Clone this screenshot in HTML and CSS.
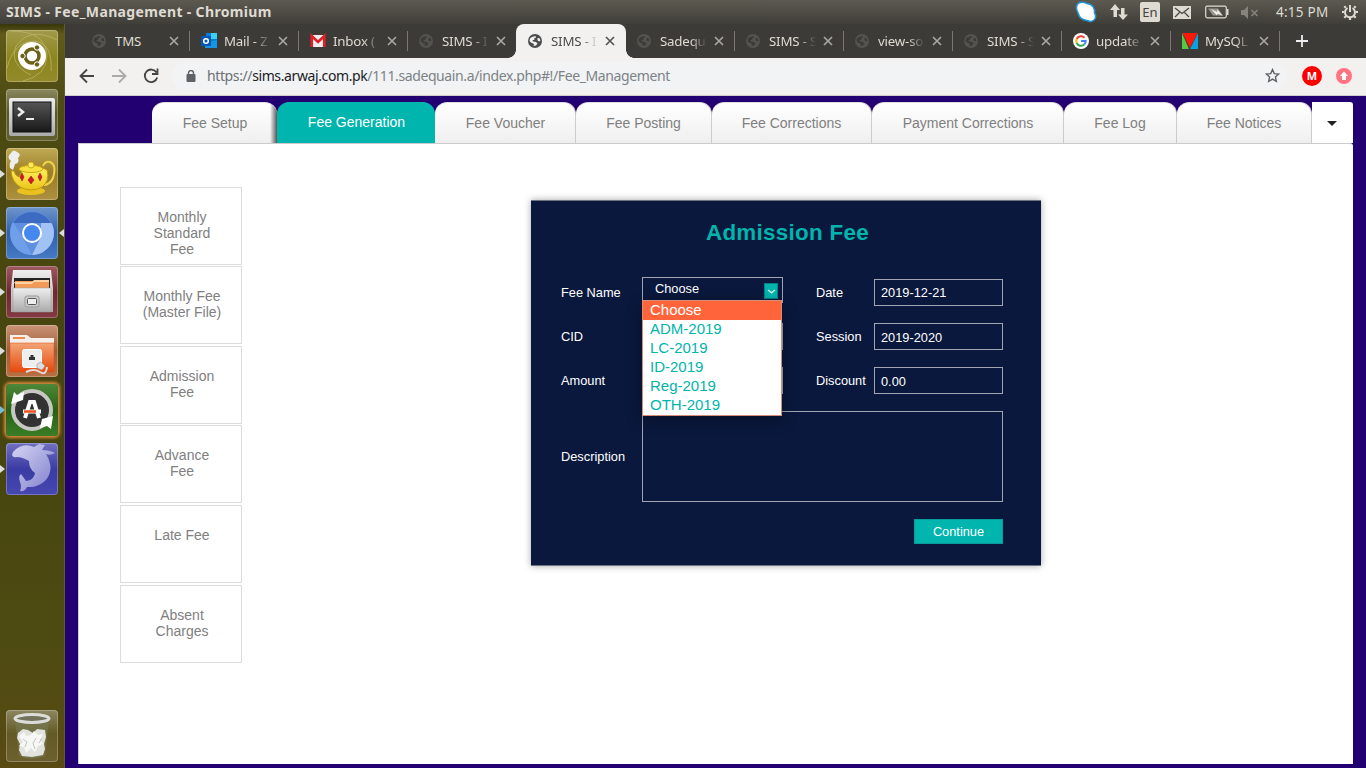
FILE: index.html
```html
<!DOCTYPE html>
<html lang="en">
<head>
<meta charset="utf-8">
<title>SIMS - Fee_Management</title>
<link rel="stylesheet" href="styles.css">
</head>
<body>
<svg class="defs" width="0" height="0">
  <defs>
    <symbol id="globe" viewBox="0 0 16 16"><circle cx="8" cy="8" r="7" fill="currentColor"/><path d="M3 5.500 5 4l3.500-1 .5 1.500-2 1 .5 1.500H5.500L6 8.500l3 .5 1.500 1.500L9 12.500l-2.500.5L7 11 4 9.500 2.500 8zM10.500 5l2 .2 1 2.300-1.500 1-1.500-1.200z" fill="var(--hole)"/></symbol>
    <symbol id="close" viewBox="0 0 10 10"><path d="M1 1l8 8M9 1l-8 8" stroke="currentColor" stroke-width="1.700" fill="none"/></symbol>
    <linearGradient id="metal" x2="0" y2="1"><stop offset="0" stop-color="#eee"/><stop offset="1" stop-color="#aaa"/></linearGradient>
    <linearGradient id="dark" x2="0" y2="1"><stop offset="0" stop-color="#555"/><stop offset="1" stop-color="#181818"/></linearGradient>
    <linearGradient id="gold" x2="0" y2="1"><stop offset="0" stop-color="#fff36a"/><stop offset="1" stop-color="#eac416"/></linearGradient>
    <linearGradient id="folder" x2="0" y2="1"><stop offset="0" stop-color="#f3a477"/><stop offset="1" stop-color="#e6490d"/></linearGradient>
    <linearGradient id="fish" x2="1" y2="1"><stop offset="0" stop-color="#d5d5f4"/><stop offset="1" stop-color="#7d7dcc"/></linearGradient>
  </defs>
</svg>

<header class="topbar">
  <span class="window-title">SIMS - Fee_Management - Chromium</span>
  <div class="indicators">
    <svg class="i-skype" width="24" height="24" viewBox="0 0 24 24"><path d="M4 3.500Q8 1 13 3.500C19 4 21 9 20.500 13Q23 17 20 20 17 22.500 13 20.500 6 20 4 13 1 7 4 3.500z" fill="#fff" stroke="#2196d8" stroke-width="1.500"/></svg>
    <svg class="i-net" width="18" height="18" viewBox="0 0 18 18" fill="#dfdbd2"><path d="M5 1l5 6H7v7H3.500V7H0zM13 17l-5-5.500h3V5h3.500v6.500H18z"/></svg>
    <span class="lang">En</span>
    <svg class="i-mail" width="18" height="13" viewBox="0 0 18 13"><path fill="#dfdbd2" d="M0 0h18v13H0z"/><path d="M2 2l7 5.500L16 2M2 11l4.500-4.500M16 11l-4.500-4.500" fill="none" stroke="#45433d" stroke-width="1.200"/></svg>
    <svg class="i-batt" width="24" height="14" viewBox="0 0 24 14"><rect x=".7" y="1.200" width="20.600" height="11.600" rx="1.500" fill="none" stroke="#dfdbd2" stroke-width="1.200"/><path d="M22 4h1.500v6H22z" fill="#dfdbd2"/><path d="M3 3.500h10l5 7H8z" fill="#99968e"/><path d="M6 4l6 3 .5-2.500 5 6.500-5-2.500-.5 2z" fill="#f3f0e7"/></svg>
    <svg class="i-vol" width="18" height="13" viewBox="0 0 18 13" fill="#86837b"><path d="M0 4h3l4-4v13L3 9H0z"/><path d="M10.500 4l6 6m0-6l-6 6" stroke="#86837b" stroke-width="1.700"/></svg>
    <span class="clock">4:15 PM</span>
    <svg class="i-gear" width="16" height="16" viewBox="0 0 16 16" fill="none" stroke="#dfdbd2"><path d="M5.500 4a5 5 0 1 0 5 0" stroke-width="2"/><path d="M8 1v7" stroke-width="2"/><path d="M0 8h2m12 0h2M2.300 2.300l1.500 1.500m8.400 0 1.500-1.500M2.300 13.700l1.500-1.500m8.400 0 1.500 1.500M8 14v2" stroke-width="2.200"/></svg>
  </div>
</header>

<div class="desktop">
  <aside class="launcher">
    <div class="app ubuntu"><svg viewBox="0 0 52 52"><g fill="none" stroke="#c5bf78" opacity=".6"><path d="M5 1q35 0 36 25-1 20-24 25M51 10Q24-4 10 16 3 35 25 45M1 38q7-27 28-27 18 3 16 30" stroke-width="1"/></g><circle cx="26" cy="26" r="14" fill="#fff"/><circle cx="26" cy="26" r="7" fill="none" stroke="#6b6116" stroke-width="3.500"/><g fill="#6b6116" stroke="#fff" stroke-width="1"><circle cx="16.500" cy="26" r="2.700"/><circle cx="31" cy="17.500" r="2.700"/><circle cx="31" cy="34.500" r="2.700"/></g></svg></div>
    <div class="app terminal"><svg viewBox="0 0 52 52"><rect x="3" y="9" width="46" height="38" rx="2" fill="url(#metal)"/><rect x="7" y="13" width="38" height="30" fill="url(#dark)" stroke="#111"/><path d="M12 19l5 4-5 4" fill="none" stroke="#eee" stroke-width="2.500"/><path d="M20 30h8" stroke="#eee" stroke-width="2"/></svg></div>
    <div class="app teapot run"><svg viewBox="0 0 52 52"><path d="M4 20q-1-5 1-7-5-4 0-8 2-4 6-1 5 2 1 6 2 5-3 6l-2 6z" fill="#eee"/><path d="M37 18q2-5 7-4 7 3 3 16-3 7-10 7" fill="none" stroke="#efd34a" stroke-width="2"/><ellipse cx="25" cy="43" rx="14" ry="4" fill="#eac21f"/><path d="M13 29q-4-1-5-6l-3 0q1 11 9 16 11 6 22 0 8-6 5-17-12-7-24 0z" fill="url(#gold)" stroke="#c69c0d"/><ellipse cx="25" cy="21" rx="12" ry="3.500" fill="#f7df3d" stroke="#d2a812"/><circle cx="25" cy="17" r="3" fill="#fbea63" stroke="#d2a812"/><path d="M16 25l2 4-2 4-2-4zM25 28l3 4-3 4-3-4zM34 25l2 4-2 4-2-4z" fill="#d6142a" stroke="#851616" stroke-width=".5"/></svg></div>
    <div class="app chromium run focused"><svg viewBox="0 0 52 52"><circle cx="26" cy="26" r="22" fill="#5f8fdf"/><path d="M7 16A22 22 0 0 1 45 16H26z" fill="#3c6bc1"/><path d="M45.500 16A22 22 0 0 1 26 48L35 30V16z" fill="#a2c2f5"/><path d="M7 15L17 31l9 17A22 22 0 0 1 7 15z" fill="#709fea"/><circle cx="26" cy="26" r="10" fill="#fff"/><circle cx="26" cy="26" r="8" fill="#4488f0"/></svg></div>
    <div class="app files run"><svg viewBox="0 0 52 52"><path d="M7 4h38l2 18v24H5V22z" fill="url(#metal)"/><path d="M8 12h36v10H8z" fill="#222"/><path d="M9 15h34v7H9z" fill="#f29a58"/><path d="M8 16h18l2-2h15v2H28l-2 2H9z" fill="#fbd2a5"/><path d="M7 22h38v24H7z" fill="url(#metal)" stroke="#999" stroke-width=".5"/><rect x="19" y="30" width="14" height="11" rx="2" fill="#ccc" stroke="#999"/><rect x="21.500" y="32.500" width="9" height="6" rx="1" fill="#eee" stroke="#555"/></svg></div>
    <div class="app share run"><svg viewBox="0 0 52 52"><path d="M4 10h17l4 3h23v7H4z" fill="#f5eee9"/><path d="M7 12h12v2H7z" fill="#ed8855"/><path d="M4 18h44v27q0 2-2 2H6q-2 0-2-2z" fill="url(#folder)" stroke="#d84d15" stroke-width=".5"/><rect x="16.500" y="24.500" width="19" height="18" rx="2" fill="#eee" stroke="#fff"/><path d="M23 35v-3h1.500v-2h3v2H29v3z" fill="#333"/><path d="M20 47q8-4 14 0t7-5" fill="none" stroke="#ddd" stroke-width="2"/><path d="M31 39l4-2 4 4-3 4-5-2z" fill="#ddd" stroke="#999" stroke-width=".6"/></svg></div>
    <div class="app updater run"><svg viewBox="0 0 52 52"><circle cx="26" cy="26" r="19" fill="#333" stroke="#c8c8c2" stroke-width="4"/><path d="M5 20L8 8l3 3 7-3-1 8z" fill="#fff"/><path d="M47 32l-2 13-4-3-7 2 2-9z" fill="#fff"/><path d="M19 34l5-16h4l5 16" fill="none" stroke="#fff" stroke-width="4"/><path d="M17 27.500h18" stroke="#fff" stroke-width="4"/><path d="M18 27.500h12" stroke="#e9541e" stroke-width="2.500"/></svg></div>
    <div class="app workbench run"><svg viewBox="0 0 52 52"><path d="M7 9Q16-1 28 4l5-3 6 1-3 5q8 0 13 3-5 3-9 1 9 15 0 26-8 8-19 7-2 5-7 4 2-5 0-9-2-6 1-8 3 4 5 7 8-1 9-8-6-4-6-12-7-4-12-4-4 1-5-2z" fill="url(#fish)"/></svg></div>
    <div class="app trash"><svg viewBox="0 0 52 52"><path d="M9 9l4 37q13 6 26 0l4-37z" fill="#777b55" opacity=".6"/><path d="M12 23l5-4 5 1 5 3 4-4 8 1 1 7-2 7 1 5-2 6-11 2-10-1-3-6 1-6-3-6z" fill="#e2e2df"/><path d="M13 26l5-4 2 4 5-1 3-4 4 4 5-1-3 6 3 4-5 2-3 6-4-4-5 5-2-6-5-1 4-4z" fill="#f7f7f5"/><path d="M17 29l4 3-2 5m11-9l-3 5 2 6m7-11l-3 5" fill="none" stroke="#c4c4c0"/><ellipse cx="26" cy="8.500" rx="17" ry="4" fill="#72725c" stroke="#dcdcd8" stroke-width="3"/></svg></div>
  </aside>

  <main class="browser">
    <nav class="tabstrip">
      <div class="tab"><svg class="fav globe"><use href="#globe"/></svg><span>TMS</span><svg class="x"><use href="#close"/></svg></div>
      <div class="tab"><svg class="fav" viewBox="0 0 16 16"><path d="M5 0h11v14H5z" fill="#0a7bd7"/><path d="M10 0h6v6h-6z" fill="#38d4f8"/><path d="M4 10l12-3v8H4z" fill="#1596e4"/><path d="M0 3h10v10H0z" fill="#0755b5"/><circle cx="5" cy="8" r="2.300" fill="none" stroke="#fff" stroke-width="1.500"/></svg><span>Mail - Z</span><svg class="x"><use href="#close"/></svg></div>
      <div class="tab"><svg class="fav" viewBox="0 0 16 16"><path d="M1 2h14v12H1z" fill="#eee"/><path d="M1.700 14V3L8 9l6.300-6v11" fill="none" stroke="#df2027" stroke-width="2.700"/></svg><span>Inbox (</span><svg class="x"><use href="#close"/></svg></div>
      <div class="tab no-sep"><svg class="fav globe"><use href="#globe"/></svg><span>SIMS - I</span><svg class="x"><use href="#close"/></svg></div>
      <div class="tab active"><svg class="fav globe"><use href="#globe"/></svg><span>SIMS - I</span><svg class="x"><use href="#close"/></svg></div>
      <div class="tab"><svg class="fav globe"><use href="#globe"/></svg><span>Sadequ</span><svg class="x"><use href="#close"/></svg></div>
      <div class="tab"><svg class="fav globe"><use href="#globe"/></svg><span>SIMS - S</span><svg class="x"><use href="#close"/></svg></div>
      <div class="tab"><svg class="fav globe"><use href="#globe"/></svg><span>view-so</span><svg class="x"><use href="#close"/></svg></div>
      <div class="tab"><svg class="fav globe"><use href="#globe"/></svg><span>SIMS - S</span><svg class="x"><use href="#close"/></svg></div>
      <div class="tab"><svg class="fav" viewBox="0 0 16 16"><circle cx="8" cy="8" r="8" fill="#fff"/><g fill="none" stroke-width="2"><path d="M11.500 4.700A4.800 4.800 0 0 0 3.700 6" stroke="#ea4335"/><path d="M3.700 6a4.800 4.800 0 0 0 0 4" stroke="#fbbc05"/><path d="M3.700 10a4.800 4.800 0 0 0 7.500 1.600" stroke="#34a853"/><path d="M11.200 11.600A4.500 4.500 0 0 0 12.700 8H8" stroke="#4285f4"/></g></svg><span>update</span><svg class="x"><use href="#close"/></svg></div>
      <div class="tab"><svg class="fav" viewBox="0 0 16 16"><path d="M0 0v16h7z" fill="#56c940"/><path d="M16 0v16H8z" fill="#08a1e2"/><path d="M.5 0h15L8 15z" fill="#fb1808"/></svg><span>MySQL</span><svg class="x"><use href="#close"/></svg></div>
      <svg class="plus" viewBox="0 0 12 12"><path d="M6 0v12M0 6h12" stroke="#eee" stroke-width="1.800"/></svg>
    </nav>
    <div class="toolbar">
      <svg width="16" height="16" viewBox="0 0 16 16" fill="none" stroke="#444" stroke-width="1.800"><path d="M15 8H2M8 1.500L1.500 8 8 14.500"/></svg>
      <svg width="16" height="16" viewBox="0 0 16 16" fill="none" stroke="#aaa" stroke-width="1.800"><path d="M1 8h13M8 1.500L14.500 8 8 14.500"/></svg>
      <svg width="16" height="16" viewBox="0 0 16 16" fill="none" stroke="#444" stroke-width="1.800"><path d="M13.500 4.500A6.300 6.300 0 1 0 14.200 9.500M9 6h5.500V.5"/></svg>
      <div class="omnibox">
        <svg width="10" height="12" viewBox="0 0 10 12"><rect x=".5" y="4" width="9" height="8" rx="1" fill="#5f6368"/><path d="M2.500 5V3a2.500 2.500 0 0 1 5 0v2" fill="none" stroke="#5f6368" stroke-width="1.400"/></svg>
        <span class="url"><i>https://</i>sims.arwaj.com.pk<em>/111.sadequain.a/index.php#!/Fee_Management</em></span>
        <svg class="star" width="15" height="15" viewBox="0 0 16 16"><path d="M8 1.700l1.900 4.300 4.700.5-3.500 3.100 1 4.700L8 11.900l-4.100 2.400 1-4.700L1.400 6.500 6.100 6z" fill="none" stroke="#5f6368" stroke-width="1.500"/></svg>
      </div>
      <span class="ext-m">M</span>
      <svg width="16" height="16" viewBox="0 0 16 16"><circle cx="8" cy="8" r="8" fill="#ff7480"/><path d="M8 3.500l4 4.500h-2v4H6V8H4z" fill="#fff"/></svg>
    </div>

    <div class="page">
      <nav class="menu">
        <a class="item setup">Fee Setup</a>
        <a class="item on generation">Fee Generation</a>
        <a class="item voucher">Fee Voucher</a>
        <a class="item posting">Fee Posting</a>
        <a class="item corrections">Fee Corrections</a>
        <a class="item payment">Payment Corrections</a>
        <a class="item log">Fee Log</a>
        <a class="item notices">Fee Notices</a>
        <a class="more"></a>
      </nav>
      <section class="panel">
        <div class="side">
          <a>Monthly<br>Standard<br>Fee</a>
          <a>Monthly Fee<br>(Master File)</a>
          <a>Admission<br>Fee</a>
          <a>Advance<br>Fee</a>
          <a>Late Fee</a>
          <a>Absent<br>Charges</a>
        </div>
        <form class="card">
          <h1>Admission Fee</h1>
          <div class="grid">
            <label>Fee Name</label>
            <div class="select">
              <span>Choose</span>
              <b class="arrow"><svg viewBox="0 0 9 5"><path d="M1 1l3.500 2.800L8 1" fill="none" stroke="#cdf3f0" stroke-width="1.300"/></svg></b>
              <ul class="options"><li class="sel">Choose</li><li>ADM-2019</li><li>LC-2019</li><li>ID-2019</li><li>Reg-2019</li><li>OTH-2019</li></ul>
            </div>
            <label class="second">Date</label><div class="field date">2019-12-21</div>
            <label>CID</label><div class="field"></div>
            <label class="second">Session</label><div class="field">2019-2020</div>
            <label>Amount</label><div class="field"></div>
            <label class="second">Discount</label><div class="field">0.00</div>
            <label>Description</label><div class="field wide"></div>
            <button type="button">Continue</button>
          </div>
        </form>
      </section>
    </div>
  </main>
</div>
</body>
</html>
```
FILE: styles.css
```css
* { box-sizing: border-box; }
body { margin: 0; width: 1366px; height: 768px; overflow: hidden; display: flex; flex-direction: column; font-family: "Liberation Sans", Arial, sans-serif; }
.defs { position: absolute; }
svg { display: block; flex: none; }

.topbar { height: 24px; flex: none; background: linear-gradient(#5c5a50, #403e39); display: flex; justify-content: space-between; align-items: center; padding: 0 8px 0 6px; font: 13.500px "Noto Sans", sans-serif; color: #dfdbd2; }
.window-title { font-weight: 700; font-size: 14px; letter-spacing: .35px; line-height: 22px; margin-top: -1px; }
.indicators { display: flex; align-items: center; }
.i-net { margin-left: 12px; }
.lang { margin-left: 12px; width: 20px; height: 20px; border-radius: 2px; background: #dfdbd2; color: #45433d; text-align: center; line-height: 21px; font-size: 13px; }
.i-mail { margin-left: 13px; }
.i-batt { margin-left: 14px; }
.i-vol { margin-left: 12px; }
.clock { margin-left: 17px; width: 53px; white-space: nowrap; letter-spacing: .25px; }
.i-gear { margin-left: 13px; }

.desktop { flex: 1; display: flex; min-height: 0; }
.launcher { width: 65px; flex: none; padding: 6px 0 6px 6px; border-right: 1px solid #5d5a3a; display: flex; flex-direction: column; gap: 7px; background: linear-gradient(#37360b 0, #615a19 10px, #4d4a12 80px, #46440f 400px, #4e4b12 620px, #594b13 100%); }
.app { width: 52px; height: 52px; flex: none; border-radius: 4px; position: relative; box-shadow: inset 0 0 0 1px rgba(255,255,255,.25); background: linear-gradient(rgba(255,255,255,.33), rgba(255,255,255,.08) 45%, rgba(255,255,255,.12)); }
.app svg { width: 52px; height: 52px; }
.ubuntu { background: linear-gradient(#a39a4b, #8c851e 55%, #938a2b); }
.teapot { background: linear-gradient(#c0aa55, #9a7d25 50%, #ae9141); }
.chromium { background: linear-gradient(#6e96ce, #315fab 50%, #477bc4); }
.files { background: linear-gradient(#9f5a61, #6d2730 50%, #843b43); }
.share { background: linear-gradient(#c99376, #a05c38 50%, #b87145); }
.updater { background: linear-gradient(#4f873a, #286016 50%, #3b7d27); box-shadow: 0 0 3px 2px #d48a3d; }
.workbench { background: linear-gradient(#7171bf, #3b3ba4 50%, #4747b0); }
.trash { margin-top: auto; }
.run::before { content: ""; position: absolute; left: -6px; top: 22px; border: 4px solid transparent; border-left: 5px solid #ddd; border-right: 0; }
.updater::before { border-left-color: #70bed5; }
.focused::after { content: ""; position: absolute; right: -6px; top: 22px; border: 4px solid transparent; border-right: 5px solid #ddd; border-left: 0; }

.browser { flex: 1; min-width: 0; display: flex; flex-direction: column; }
.tabstrip { height: 34px; flex: none; padding-left: 15px; background: #3c3b37; display: flex; align-items: center; font: 13.300px "Noto Sans", sans-serif; color: #dfdbd2; }
.tab { --hole: #3c3b37; width: 109px; height: 34px; flex: none; display: flex; align-items: center; padding-left: 11px; position: relative; }
.tab:not(.active):not(.no-sep)::after { content: ""; position: absolute; right: -1px; top: 7px; width: 1px; height: 20px; background: #79776f; }
.tab .fav { width: 16px; height: 16px; margin-left: 1px; }
.tab .globe { margin-left: 0; margin-right: 1px; }
.globe { color: #54534f; }
.tab span { width: 49px; margin-left: 7px; white-space: nowrap; letter-spacing: -.2px; -webkit-mask-image: linear-gradient(90deg, #000 30px, transparent 47px); mask-image: linear-gradient(90deg, #000 30px, transparent 47px); }
.tab .x { width: 10px; height: 10px; margin-left: 5px; color: #aaa79f; }
.tab:first-child span { -webkit-mask-image: none; mask-image: none; }
.active { --hole: #f2f1f0; background: #f2f1f0; width: 110px; margin-right: -1px; border-radius: 8px 8px 0 0; color: #4c4c4c; }
.active::before, .active::after { content: ""; position: absolute; bottom: 0; width: 8px; height: 8px; }
.active::before { left: -8px; background: radial-gradient(circle at 0 0, transparent 7.500px, #f2f1f0 8px); }
.active::after { right: -8px; background: radial-gradient(circle at 100% 0, transparent 7.500px, #f2f1f0 8px); }
.active .globe { color: #4b4c4d; }
.active .x { color: #555; }
.plus { width: 12px; height: 12px; margin-left: 17px; }

.toolbar { height: 38px; flex: none; border-bottom: 1px solid #cfcdca; background: #f2f1f0; display: flex; align-items: center; padding: 0 14px 2px; gap: 16px; }
.omnibox { width: 1114px; height: 28px; border-radius: 14px; background: #f1f3f4; margin-left: -3px; display: flex; align-items: center; padding: 0 6px 0 14px; }
.url { flex: 1; margin-left: 11px; font: 14px "Noto Sans", sans-serif; letter-spacing: -.39px; color: #202124; white-space: nowrap; }
.url i, .url em { font-style: normal; color: #6b7075; }
.url em { color: #7d8287; }
.ext-m { width: 20px; height: 20px; flex: none; border-radius: 10px; background: #f00; color: #fff; font: 700 11px/20px "Noto Sans", sans-serif; text-align: center; }
.ext-m + svg { margin-left: -2px; }

.page { flex: 1; min-height: 0; background: #220071; padding: 6px 13px 4px; display: flex; flex-direction: column; }
.menu { height: 41px; flex: none; padding-left: 74px; display: flex; }
.item { flex: none; border-radius: 12px 12px 0 0; border-right: 1px solid #ccc; border-top: 1px solid #ddd; background: linear-gradient(#fff, #efefef); color: #808080; font-size: 14px; line-height: 41px; text-align: center; padding-left: 1px; }
.setup { width: 125px; border-right: 0; background: linear-gradient(90deg, transparent 118px, rgba(0,0,0,.65) 125px), linear-gradient(#fff, #efefef); }
.generation { width: 158px; }
.on { background: #00b5ad; color: #fff; border: 0; line-height: 40px; }
.voucher { width: 141px; }
.posting { width: 136px; padding-left: 0; }
.corrections { width: 160px; padding-left: 0; }
.payment { width: 192px; }
.log { width: 113px; padding-left: 0; }
.notices { width: 135px; padding-left: 0; }
.more { width: 41px; background: #fff; border-radius: 0 3px 0 0; display: flex; align-items: center; justify-content: center; padding-right: 1px; }
.more::after { content: ""; border: 5px solid transparent; border-top-color: #222; border-bottom: 0; margin-top: 2px; }
.panel { flex: 1; min-height: 0; background: #fff; border: 1px solid #ccc; border-width: 1px 0 0 1px; border-radius: 0 3px 0 0; display: flex; align-items: flex-start; }
.side { padding: 42.600px 0 0 41px; display: flex; flex-direction: column; gap: 1.600px; }
.side a { width: 122px; height: 78px; border: 1px solid #ddd; padding: 21px 0 0 2px; text-align: center; font-size: 14px; line-height: 16px; color: #808080; }

.card { margin: 56px 0 0 289px; width: 510px; height: 366px; background: #0a183d; border: solid #6f7481; border-width: 1px 0; box-shadow: 0 0 7px rgba(0,0,0,.35); padding: 0 38px 0 30px; }
.card h1 { margin: 0; height: 78px; padding: 18px 0 0 11px; text-align: center; font-size: 22.400px; letter-spacing: .3px; line-height: 27px; color: #00b5ad; }
.grid { display: grid; grid-template-columns: 81px 141px 91px 129px; grid-template-rows: 27px 27px 27px 91px 25px; row-gap: 17px; font-size: 12.800px; color: #fff; margin-right: -10px; }
.grid label { align-self: center; }
.grid .second { padding-left: 33px; }
.field { border: 1px solid #a0a5b1; padding: 1px 0 0 6px; line-height: 26px; }
.date { line-height: 24px; }
.wide { grid-column: 2 / 5; }
.select { position: relative; height: 26px; margin-top: -2px; border: 1px solid #a0a5b1; padding-left: 12px; line-height: 22px; }
.arrow { position: absolute; right: 4px; top: 5px; width: 14px; height: 16px; background: #00b5ad; border: 1px solid #087f85; display: flex; align-items: center; justify-content: center; }
.arrow svg { width: 9px; height: 5px; }
.options { position: absolute; z-index: 2; left: -1px; top: 22px; width: 140px; margin: 0; padding: 0; list-style: none; border: 1px solid #d78d78; background: #fff; color: #00b5ad; font-size: 15px; line-height: 17px; box-shadow: 0 4px 14px rgba(0,0,0,.35); }
.options li { padding-left: 7px; height: 19px; }
.options .sel { background: #ff643b; color: #fff; }
button { grid-column: 4; justify-self: end; width: 89px; border: 1px solid #089b99; padding: 0; background: #00b5ad; color: #fff; font: 12.800px "Liberation Sans", sans-serif; }
```
